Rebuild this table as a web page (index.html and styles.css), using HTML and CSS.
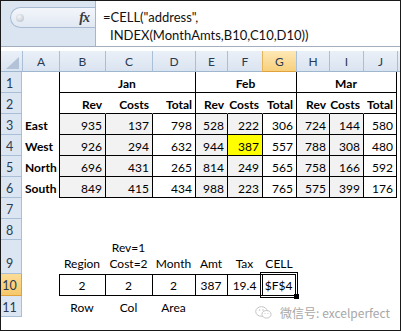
FILE: index.html
```html
<!DOCTYPE html>
<html lang="en">
<head>
    <meta charset="UTF-8">
    <title>CELL address INDEX</title>
    <link rel="stylesheet" href="styles.css">
</head>
<body>

    <div class="frame">

        <!-- formula bar -->
        <div class="fbar">
            <div class="fbar-left">
                <div class="namebox">
                    <span class="dimple"></span>
                    <span class="fx">fx</span>
                </div>
            </div>
            <div class="fbar-text">
                <div>=CELL("address",</div>
                <div class="indent">INDEX(MonthAmts,B10,C10,D10))</div>
            </div>
        </div>
        <div class="gap"></div>

        <!-- sheet -->
        <div class="sheet">
            <div class="row hdr">
                <div class="corner"><span class="tri"></span></div>
                <div class="ch">A</div>
                <div class="ch">B</div>
                <div class="ch">C</div>
                <div class="ch">D</div>
                <div class="ch">E</div>
                <div class="ch">F</div>
                <div class="ch sel">G</div>
                <div class="ch">H</div>
                <div class="ch">I</div>
                <div class="ch">J</div>
                <div class="ch"></div>
            </div>

            <div class="row">
                <div class="rh">1</div>
                <div class="c"></div>
                <div class="c span3 bl bb b ctr">Jan</div>
                <div class="c span3 bl bb b ctr">Feb</div>
                <div class="c span3 bl bb br b ctr">Mar</div>
                <div class="c"></div>
            </div>

            <div class="row">
                <div class="rh">2</div>
                <div class="c"></div>
                <div class="c bl bb b num">Rev</div>
                <div class="c bb b num">Costs</div>
                <div class="c bb b num">Total</div>
                <div class="c bl bb b num">Rev</div>
                <div class="c bb b num">Costs</div>
                <div class="c bb b num">Total</div>
                <div class="c bl bb b num">Rev</div>
                <div class="c bb b num">Costs</div>
                <div class="c bb br b num">Total</div>
                <div class="c"></div>
            </div>

            <div class="row">
                <div class="rh">3</div>
                <div class="c b lbl">East</div>
                <div class="c bl bb gry num">935</div>
                <div class="c bl bb gry num">137</div>
                <div class="c bl bb num">798</div>
                <div class="c bl bb gry num">528</div>
                <div class="c bl bb gry num">222</div>
                <div class="c bl bb num">306</div>
                <div class="c bl bb gry num">724</div>
                <div class="c bl bb gry num">144</div>
                <div class="c bl bb br num">580</div>
                <div class="c"></div>
            </div>

            <div class="row">
                <div class="rh">4</div>
                <div class="c b lbl">West</div>
                <div class="c bl bb gry num">926</div>
                <div class="c bl bb gry num">294</div>
                <div class="c bl bb num">632</div>
                <div class="c bl bb gry num">944</div>
                <div class="c bl bb hl num">387</div>
                <div class="c bl bb num">557</div>
                <div class="c bl bb gry num">788</div>
                <div class="c bl bb gry num">308</div>
                <div class="c bl bb br num">480</div>
                <div class="c"></div>
            </div>

            <div class="row">
                <div class="rh">5</div>
                <div class="c b lbl">North</div>
                <div class="c bl bb gry num">696</div>
                <div class="c bl bb gry num">431</div>
                <div class="c bl bb num">265</div>
                <div class="c bl bb gry num">814</div>
                <div class="c bl bb gry num">249</div>
                <div class="c bl bb num">565</div>
                <div class="c bl bb gry num">758</div>
                <div class="c bl bb gry num">166</div>
                <div class="c bl bb br num">592</div>
                <div class="c"></div>
            </div>

            <div class="row">
                <div class="rh">6</div>
                <div class="c b lbl">South</div>
                <div class="c bl bb gry num">849</div>
                <div class="c bl bb gry num">415</div>
                <div class="c bl bb num">434</div>
                <div class="c bl bb gry num">988</div>
                <div class="c bl bb gry num">223</div>
                <div class="c bl bb num">765</div>
                <div class="c bl bb gry num">575</div>
                <div class="c bl bb gry num">399</div>
                <div class="c bl bb br num">176</div>
                <div class="c"></div>
            </div>

            <div class="row">
                <div class="rh">7</div>
                <div class="c rest"></div>
            </div>

            <div class="row">
                <div class="rh">8</div>
                <div class="c rest"></div>
            </div>

            <div class="row tall">
                <div class="rh">9</div>
                <div class="c"></div>
                <div class="c ctr">Region</div>
                <div class="c ctr">Rev=1<br>Cost=2</div>
                <div class="c ctr">Month</div>
                <div class="c ctr">Amt</div>
                <div class="c ctr">Tax</div>
                <div class="c ctr">CELL</div>
                <div class="c span4"></div>
            </div>

            <div class="row inputs">
                <div class="rh sel">10</div>
                <div class="c"></div>
                <div class="c bl bt bb ctr">2</div>
                <div class="c bl bt bb ctr">2</div>
                <div class="c bl bt bb ctr">2</div>
                <div class="c bl bt bb ctr">387</div>
                <div class="c bl bt bb ctr">19.4</div>
                <div class="c bl bt bb br ctr active">$F$4<span class="handle"></span></div>
                <div class="c span4"></div>
            </div>

            <div class="row">
                <div class="rh">11</div>
                <div class="c"></div>
                <div class="c ctr">Row</div>
                <div class="c ctr">Col</div>
                <div class="c ctr">Area</div>
                <div class="c span7"></div>
            </div>
        </div>

        <!-- watermark -->
        <div class="mark">
            <svg class="wx" width="17" height="13" viewBox="0 0 17 13">
                <ellipse cx="6.5" cy="5.5" rx="5.8" ry="4.8" fill="none" stroke="#c4c4c4" stroke-width="1"/>
                <ellipse cx="11.5" cy="8.3" rx="4.6" ry="3.8" fill="#fff" stroke="#c4c4c4" stroke-width="1"/>
                <circle cx="4.5" cy="4" r="0.8" fill="#c4c4c4"/>
                <circle cx="8" cy="4" r="0.8" fill="#c4c4c4"/>
                <circle cx="10" cy="7.5" r="0.6" fill="#c4c4c4"/>
                <circle cx="13" cy="7.5" r="0.6" fill="#c4c4c4"/>
            </svg>
            <span>微信号: excelperfect</span>
        </div>
    </div>

</body>
</html>
```

FILE: styles.css
```css
/* --- page frame --- */
body {
    margin: 0;
    background-color: #ffffff;
}

.frame {
    position: relative;
    width: 401px;
    height: 331px;
    box-sizing: border-box;
    border: 1px solid #1a1a1a;
    overflow: hidden;
    background-color: #ffffff;
    font-family: Lato, "Noto Sans", sans-serif;
    color: #000;
}

/* --- formula bar --- */
.fbar {
    display: flex;
    height: 46px;
    box-sizing: border-box;
    border-bottom: 1px solid #a3afbf;
}

.fbar-left {
    width: 94px;
    background-color: #dbe5f1;
}

.namebox {
    display: flex;
    align-items: center;
    justify-content: space-between;
    height: 21px;
    box-sizing: border-box;
    margin: 6px 0 0 9px;
    padding: 0 6px 0 5px;
    border: 1px solid #a9bbd3;
    border-right: none;
    border-radius: 11px 0 0 11px;
    background: linear-gradient(#f3f6fb, #e1e8f2);
}

.dimple {
    width: 8px;
    height: 8px;
    border-radius: 50%;
    background: radial-gradient(circle at 40% 35%, #f4f5f7, #b4bcc7);
}

.fx {
    font-family: "Liberation Serif", serif;
    font-style: italic;
    font-weight: bold;
    font-size: 14px;
    color: #3a3a3a;
    letter-spacing: -1px;
}

.fbar-text {
    flex: 1;
    border-left: 1px solid #a5b6cc;
    padding: 7px 0 0 7px;
    font-size: 13px;
    line-height: 18px;
    color: #111;
    background-color: #ffffff;
}

.indent {
    padding-left: 7px;
}

.gap {
    height: 4px;
}

/* --- sheet grid --- */
.row {
    display: grid;
    grid-template-columns: 21px 37px 46px 47px 43px 32px 35px 34px 33px 34px 34px 1fr;
    height: 21px;
    font-size: 12px;
    line-height: 14px;
}

.row.tall {
    height: 34px;
    line-height: 16px;
}

.row.inputs {
    height: 22px;
}

.row.inputs .c {
    padding-bottom: 2px;
}

.row > div {
    box-sizing: border-box;
}

/* column headers */
.hdr .ch,
.hdr .corner {
    border-bottom: 1px solid #9fb6cf;
    background: linear-gradient(#eaf0f8, #dae4f0);
    color: #2b3a50;
}

.hdr .ch {
    display: flex;
    align-items: center;
    justify-content: center;
    border-left: 1px solid #a9bfd7;
    padding-top: 1px;
}

.hdr .ch.sel {
    background: linear-gradient(#fde8b6, #f7d07c);
    border-left-color: #e8b458;
    border-bottom-color: #e1a23b;
}

.corner {
    position: relative;
}

.tri {
    position: absolute;
    right: 3px;
    bottom: 2px;
    width: 0;
    height: 0;
    border-left: 13px solid transparent;
    border-bottom: 12px solid #b3c2d6;
}

/* row headers */
.rh {
    display: flex;
    align-items: flex-end;
    justify-content: center;
    padding: 0 3px 1px 0;
    border-right: 1px solid #a9bfd7;
    border-bottom: 1px solid #a9bfd7;
    background-color: #dce6f2;
    color: #2b3a50;
    font-size: 12.5px;
}

.rh.sel {
    background: linear-gradient(#fbdc97, #f6c86a);
    border-right-color: #e1a23b;
    border-bottom-color: #e1a23b;
    padding-bottom: 2px;
}

/* cells */
.c {
    display: flex;
    align-items: flex-end;
    padding: 0 3px 1px 2px;
    border-left: 1px solid transparent;
    border-bottom: 1px solid transparent;
    white-space: nowrap;
}

.c.rest {
    grid-column: span 11;
}

.c.span3 {
    grid-column: span 3;
}

.c.span4 {
    grid-column: span 4;
}

.c.span7 {
    grid-column: span 7;
}

.bl {
    border-left-color: #000 !important;
}

.bb {
    border-bottom-color: #000 !important;
}

.bt {
    border-top: 1px solid #000;
}

.br {
    border-right: 1px solid #000;
}

.b {
    font-weight: 700;
}

.num {
    justify-content: flex-end;
}

.ctr {
    justify-content: center;
    text-align: center;
}

.lbl {
    justify-content: flex-start;
}

.gry {
    background-color: #f2f2f2;
}

.hl {
    background-color: #ffff00;
}

/* active cell outline */
.active {
    position: relative;
}

.active::after {
    content: "";
    position: absolute;
    top: -3px;
    left: -3px;
    right: -3px;
    bottom: -3px;
    border: 1px solid #000;
}

.handle {
    position: absolute;
    right: -4px;
    bottom: -4px;
    width: 5px;
    height: 5px;
    background-color: #000;
    z-index: 1;
}

/* --- watermark --- */
.mark {
    position: absolute;
    right: 10px;
    bottom: 11px;
    display: flex;
    align-items: center;
    gap: 8px;
    font-family: "Noto Sans CJK SC", "Noto Sans", sans-serif;
    font-size: 12px;
    line-height: 13px;
    color: #a8a8a8;
}

.wx {
    display: block;
}
```
